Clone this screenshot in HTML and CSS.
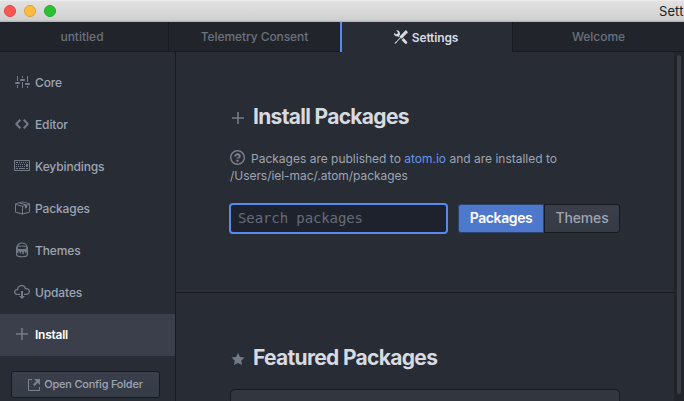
FILE: index.html
```html
<!DOCTYPE html>
<html lang="en">
<head>
<meta charset="utf-8">
<title>Settings</title>
<link rel="stylesheet" href="styles.css">
</head>
<body>
<div class="window">
  <header class="titlebar">
    <span class="light close"></span><span class="light minimize"></span><span class="light maximize"></span>
    <span class="window-title">Settings</span>
  </header>
  <nav class="tabs">
    <div class="tab first"><span>untitled</span></div>
    <div class="tab second"><span>Telemetry Consent</span></div>
    <div class="tab active"><svg width="14" height="14" viewBox="0 0 16 16"><path d="M4.48 7.27c.26.26 1.28 1.33 1.28 1.33l.56-.58-.88-.91 1.69-1.8s-.76-.74-.43-.45c.32-1.19.03-2.51-.87-3.44C4.93.5 3.66.2 2.52.51l1.93 2-.51 1.96-1.89.52-1.93-1.99C-.19 4.17.1 5.48 1 6.4c.94.98 2.29 1.26 3.48.87zm6.44 1.94l-2.33 2.3 3.84 3.98c.31.33.73.49 1.14.49.41 0 .82-.16 1.14-.49.63-.65.63-1.7 0-2.35l-3.79-3.93zM16 2.53L13.55 0 6.33 7.46l.88.91-4.31 4.46-.99.53-1.39 2.27.35.37 2.2-1.44.51-1.02L7.9 9.08l.88.91L16 2.53z"/></svg><span>Settings</span></div>
    <div class="tab last"><span>Welcome</span></div>
  </nav>
  <div class="view">
    <aside class="sidebar">
      <ul class="menu">
        <li><svg width="16" height="16" viewBox="0 0 16 16"><path d="M4 7H3V2h1v5zm-1 7h1v-3H3v3zm5 0h1V8H8v6zm5 0h1v-2h-1v2zm1-12h-1v6h1V2zM9 2H8v2h1V2zM5 8H2c-.55 0-1 .45-1 1s.45 1 1 1h3c.55 0 1-.45 1-1s-.45-1-1-1zm5-3H7c-.55 0-1 .45-1 1s.45 1 1 1h3c.55 0 1-.45 1-1s-.45-1-1-1zm5 4h-3c-.55 0-1 .45-1 1s.45 1 1 1h3c.55 0 1-.45 1-1s-.45-1-1-1z"/></svg><span>Core</span></li>
        <li><svg width="16" height="16" viewBox="-1 0 16 16"><path d="M9.5 3L8 4.5 11.5 8 8 11.5 9.5 13 14 8 9.5 3zm-5 0L0 8l4.500 5L6 11.500 2.500 8 6 4.500 4.500 3z"/></svg><span>Editor</span></li>
        <li><svg width="16" height="16" viewBox="0 0 16 16"><path d="M10 5H9V4h1v1zM3 6H2v1h1V6zm5-2H7v1h1V4zM4 4H2v1h2V4zm8 7h2v-1h-2v1zM8 7h1V6H8v1zm-4 3H2v1h2v-1zm8-6h-1v1h1V4zm2 0h-1v1h1V4zm-2 5h2V6h-2v3zm4-6v9c0 .55-.45 1-1 1H1c-.55 0-1-.45-1-1V3c0-.55.45-1 1-1h14c.55 0 1 .45 1 1zm-1 0H1v9h14V3zM6 7h1V6H6v1zm0-3H5v1h1V4zM4 7h1V6H4v1zm1 4h6v-1H5v1zm5-4h1V6h-1v1zM3 8H2v1h1V8zm5 0v1h1V8H8zM6 8v1h1V8H6zM5 8H4v1h1V8zm5 1h1V8h-1v1z"/></svg><span>Keybindings</span></li>
        <li><svg width="16" height="16" viewBox="0 0 16 16"><path d="M1 4.270v7.470c0 .45.3.84.75.97l6.500 1.730c.16.05.34.05.5 0l6.500-1.730c.45-.13.75-.52.75-.97V4.270c0-.45-.3-.84-.75-.97l-6.500-1.740a1.400 1.400 0 0 0-.5 0L1.750 3.300c-.45.13-.75.52-.75.97zm7 9.090l-6-1.590V5l6 1.610v6.750zM2 4l2.500-.67L11 5.060l-2.500.67L2 4zm13 7.770l-6 1.590V6.610l2-.55V8.500l2-.53V5.530L15 5v6.770zm-2-7.240L6.500 2.800l2-.53L15 4l-2 .53z"/></svg><span>Packages</span></li>
        <li><svg width="16" height="16" viewBox="0 0 16 16"><g class="stroke"><path d="M3 6C3 -.7 13 -.7 13 6M2.600 6v6.500c0 3 10.800 3 10.800 0V6"/><ellipse cx="8" cy="5.800" rx="5.400" ry="1.800"/></g><path d="M2.500 6.500C4 8.300 12 8.300 13.500 6.500V9.500h-1v1.800h-1.300V9.500h-1.400V12H8.300V9.800H7v1.700H5.600V9.500H4.300v1.300H2.500z"/></svg><span>Themes</span></li>
        <li><svg width="16" height="16" viewBox="0 0 16 16"><path d="M9 12h2l-3 3-3-3h2V7h2v5zm3-8c0-.44-.91-3-4.500-3C5.080 1 3 2.920 3 5 1.020 5 0 6.520 0 8c0 1.530 1 3 3 3h3V9.700H3C1.380 9.700 1.300 8.280 1.300 8c0-.17.05-1.700 1.700-1.700h1.300V5c0-1.390 1.560-2.700 3.200-2.700 2.550 0 3.130 1.550 3.200 1.800v1.200H12c.81 0 2.700.22 2.700 2.200 0 2.090-2.250 2.200-2.700 2.200h-2V11h2c2.080 0 4-1.160 4-3.500C16 5.060 14.080 4 12 4z"/></svg><span>Updates</span></li>
        <li class="selected"><svg width="16" height="16" viewBox="0 0 16 16"><path d="M2 7.200h5.200V2h1.600v5.200H14v1.600H8.800V14H7.200V8.800H2z"/></svg><span>Install</span></li>
      </ul>
      <button class="config"><svg width="12" height="14" viewBox="0 1 12 14"><path d="M11 10h1v3c0 .55-.45 1-1 1H1c-.55 0-1-.45-1-1V3c0-.55.45-1 1-1h3v1H1v10h10v-3zM6 2l2.250 2.250L5 7.500 6.500 9l3.250-3.250L12 8V2H6z"/></svg><span>Open Config Folder</span></button>
    </aside>
    <main class="content">
      <section class="install">
        <h1><svg width="16" height="16" viewBox="0 0 16 16"><path d="M2 7.200h5.200V2h1.600v5.200H14v1.600H8.800V14H7.200V8.800H2z"/></svg><span>Install Packages</span></h1>
        <p class="info"><svg width="15" height="15" viewBox="0 1 14 14"><path d="M6 10h2v2H6v-2zm4-3.500C10 8.640 8 9 8 9H6c0-.55.45-1 1-1h.5c.28 0 .5-.22.5-.5v-1c0-.28-.22-.5-.5-.5h-1c-.28 0-.5.22-.5.5V7H4c0-1.500 1.500-3 3-3s3 1 3 2.500zM7 2.300c3.140 0 5.700 2.560 5.700 5.700s-2.560 5.700-5.700 5.700A5.710 5.710 0 0 1 1.300 8c0-3.140 2.560-5.700 5.700-5.700zM7 1C3.140 1 0 4.140 0 8s3.140 7 7 7 7-3.140 7-7-3.140-7-7-7z"/></svg><span>Packages are published to <a>atom.io</a> and are installed to</span><br><span class="path">/Users/iel-mac/.atom/packages</span></p>
        <div class="search">
          <input type="text" placeholder="Search packages">
          <div class="toggle"><button class="on">Packages</button><button class="off">Themes</button></div>
        </div>
      </section>
      <section class="featured">
        <h1><svg width="14" height="14" viewBox="0 0 14 15"><path d="M14 6l-4.900-.64L7 1 4.900 5.360 0 6l3.600 3.260L2.670 14 7 11.670 11.330 14l-.93-4.740L14 6z"/></svg><span>Featured Packages</span></h1>
        <div class="card"></div>
      </section>
    </main>
    <div class="scrollbar"><div class="thumb"></div></div>
  </div>
</div>
</body>
</html>
```

FILE: styles.css
```css
* { box-sizing: border-box; }
body {
  margin: 0;
  overflow: hidden;
  background: #282c34;
  color: #9da5b4;
  font: 500 12px/17px Inter, "Liberation Sans", sans-serif;
}
svg { flex: none; display: block; fill: currentColor; }
span { white-space: nowrap; }
button { font: inherit; color: inherit; margin: 0; padding: 0; }
.window { width: 684px; height: 401px; display: flex; flex-direction: column; overflow: hidden; }

.titlebar {
  height: 22px;
  flex: none;
  display: flex;
  align-items: center;
  gap: 8px;
  padding-left: 4px;
  background: linear-gradient(#f4f4f4 0, #e2e2e2 1px, #d0d0d0 20px, #adadad 22px);
}
.light { flex: none; width: 12px; height: 12px; border-radius: 50%; border: 1px solid; }
.close { background: #fc5753; border-color: #df4744; }
.minimize { background: #fdbc40; border-color: #de9f34; }
.maximize { background: #28c232; border-color: #26a92f; }
.window-title { margin-left: 595px; padding-top: 1px; color: #222; font-weight: 400; font-size: 13px; letter-spacing: .1px; }

.tabs { display: flex; height: 30px; flex: none; background: #21252b; }
.tab {
  display: flex;
  align-items: center;
  justify-content: center;
  gap: 4px;
  color: #6b717d;
  border-bottom: 1px solid #181a1f;
}
.first { width: 169px; border-right: 1px solid #181a1f; padding-right: 4px; }
.second { width: 171px; letter-spacing: -.08px; }
.active { width: 172px; color: #d7dae0; background: #282c34; border-bottom: 0; border-left: 2px solid #568af2; padding-right: 2px; font-weight: 600; letter-spacing: -.15px; }
.last { width: 172px; border-left: 1px solid #181a1f; letter-spacing: -.05px; }

.view { flex: 1; min-height: 0; display: flex; }
.sidebar { width: 176px; flex: none; border-right: 1px solid #181a1f; padding-top: 10px; }
.menu { list-style: none; margin: 0; padding: 0; letter-spacing: -.12px; }
.menu li { height: 42px; display: flex; align-items: center; gap: 5px; padding: 0 0 2px 14px; }
.menu svg { color: #747b88; margin-bottom: 1px; }
.menu .selected { background: #3a3f4b; color: #fff; font-weight: 600; letter-spacing: -.25px; }
.stroke { fill: none; stroke: currentColor; stroke-width: 1.2; }
.config {
  width: 149px;
  height: 27px;
  margin: 15px 0 0 11px;
  padding-bottom: 1px;
  display: flex;
  align-items: center;
  justify-content: center;
  gap: 4px;
  border: 1px solid #181a1f;
  border-radius: 3px;
  background: linear-gradient(#3a3f4b, #353b45);
  font-size: 11px;
  letter-spacing: -.22px;
}
.config svg { color: #7b828f; margin-top: 2px; }

.content { width: 498px; flex: none; }
.install { height: 241px; border-bottom: 1px solid #181a1f; padding: 51px 0 0 54px; }
h1 {
  margin: 0;
  height: 28px;
  display: flex;
  align-items: center;
  gap: 7px;
  color: #d7dae0;
  font-size: 21px;
  font-weight: 700;
  line-height: 28px;
  letter-spacing: -.69px;
}
h1 svg { color: #747b88; margin-top: 2px; }
.info { margin: 19px 0 0; line-height: 17px; font-weight: 400; }
.info svg { display: inline-block; vertical-align: -2px; margin-right: 6px; color: #7b828f; }
.info a { color: #6494ed; }
.path { letter-spacing: -.05px; }
.search { display: flex; align-items: center; gap: 10px; margin: 19px 0 0 -1px; }
input {
  width: 219px;
  height: 31px;
  padding: 0 7px 2px;
  border: 2px solid #568af2;
  border-radius: 4px;
  outline: 0;
  background: #1e222d;
  color: #9da5b4;
  font: 14px "DejaVu Sans Mono", monospace;
  letter-spacing: -.1px;
}
input::placeholder { color: #666c79; }
.toggle { display: flex; width: 162px; height: 29px; }
.toggle button { border: 1px solid #181a1f; font-size: 14px; padding-bottom: 2px; }
.toggle .on { width: 86px; background: #4d78cc; color: #fff; border-color: #2e4470; border-radius: 3px 0 0 3px; font-weight: 600; letter-spacing: -.4px; }
.toggle .off { flex: 1; border-radius: 0 3px 3px 0; background: linear-gradient(#3a3f4b, #353b45); letter-spacing: -.15px; }

.featured { padding: 51px 54px 0; }
.featured h1 { padding-left: 1px; gap: 8px; }
.card { height: 50px; margin-top: 17px; border: 1px solid #181a1f; border-radius: 5px; background: #31363f; }

.scrollbar { flex: 1; background: #21252b; padding: 3px 3px 0; }
.thumb { width: 4px; height: 339px; border-radius: 2px; background: #383d48; }
```
